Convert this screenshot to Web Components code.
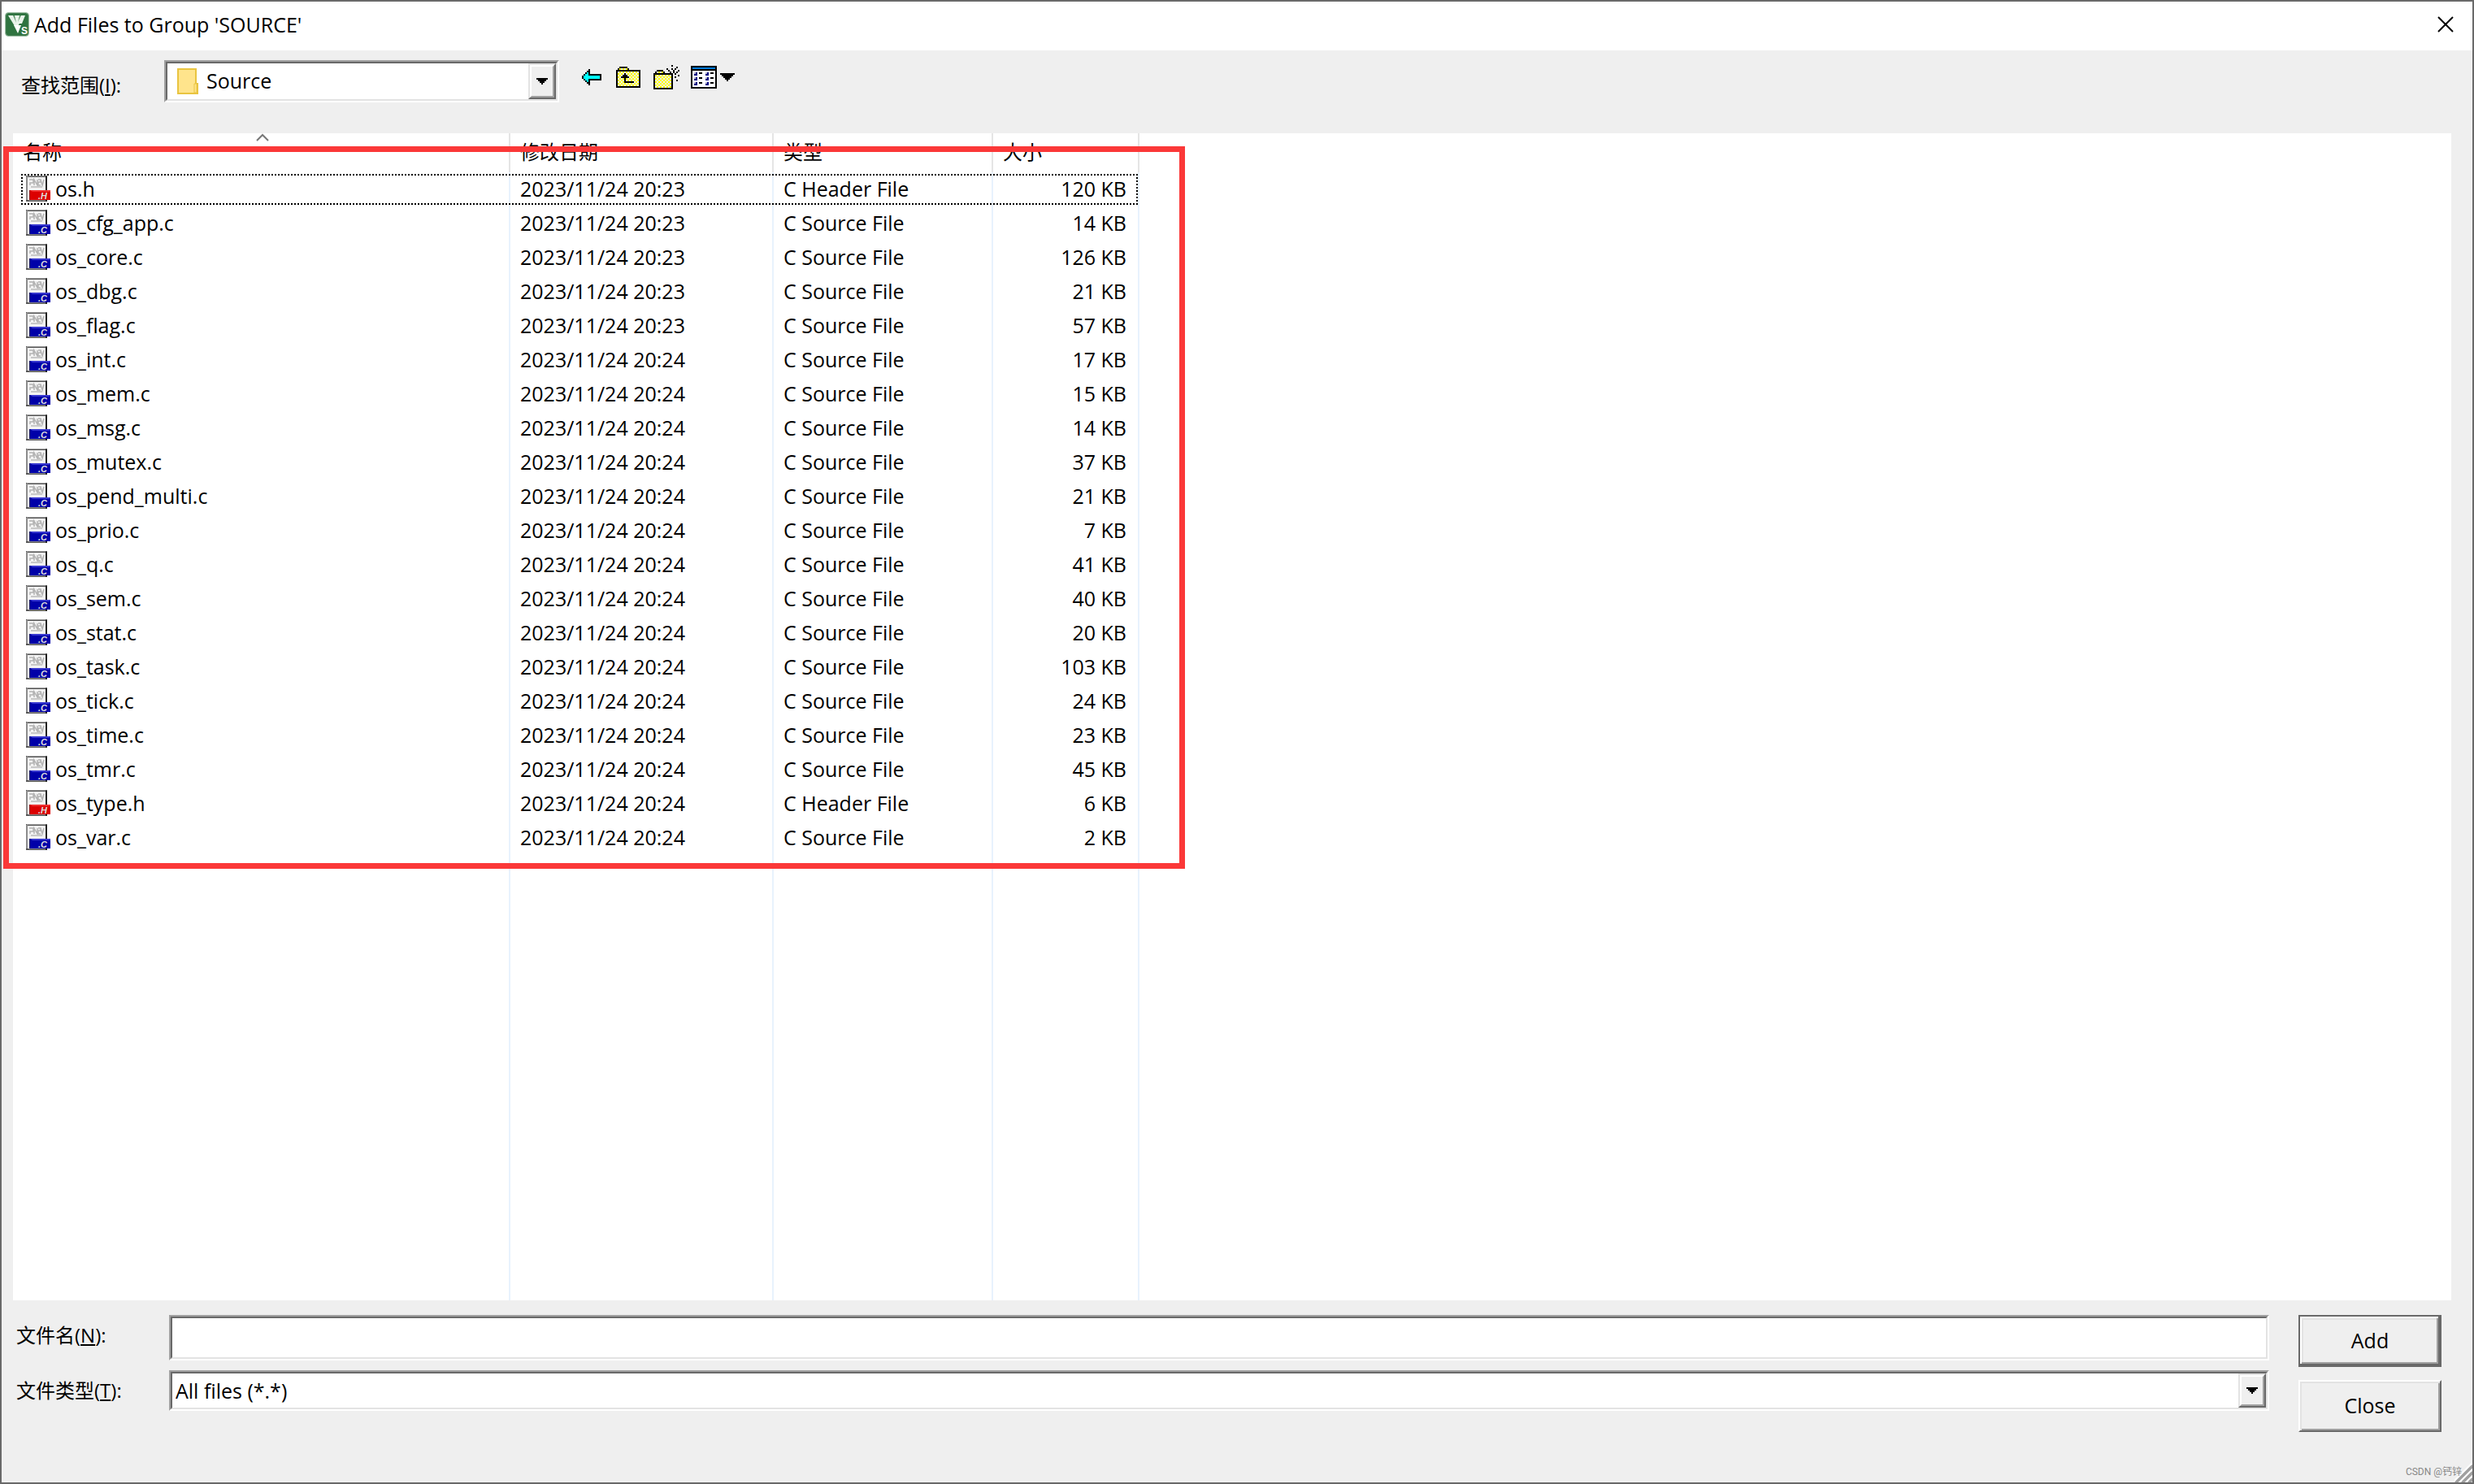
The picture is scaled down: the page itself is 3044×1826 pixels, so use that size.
<!DOCTYPE html>
<html lang="zh-CN">
<head>
<meta charset="utf-8">
<title>Add Files to Group 'SOURCE'</title>
<style>
  html, body { height: 100%; margin: 0; }
  body {
    font: 25px/32px "Open Sans", "Noto Sans CJK SC", sans-serif;
    color: #000;
    --face: #efefef;
    --frame: #696969;
    --shadow: #a0a0a0;
    --light: #e3e3e3;
  }
</style>
</head>
<body>
<file-dialog></file-dialog>
<script>
const define = (name, html, setup) => customElements.define(name, class extends HTMLElement {
  constructor() {
    super();
    this.attachShadow({ mode: 'open' });
  }
  connectedCallback() {
    if (this.shadowRoot.childNodes.length) return;
    this.shadowRoot.innerHTML = typeof html === 'function' ? html(this) : html;
    if (setup) setup(this, this.shadowRoot);
  }
});

/* Title bar: application badge, caption, close button */
define('title-bar', `
<style>
  :host { display: flex; align-items: center; box-sizing: border-box; height: 60px; padding: 0 18px 4px 4px; background: #fff; }
  svg { display: block; }
  .title { margin-left: 6px; flex: 1; }
  button { border: 0; background: none; padding: 5px; }
</style>
<svg width="30" height="30" viewBox="0 0 30 30" aria-hidden="true">
  <rect x="0.5" y="0.5" width="29" height="29" rx="4" fill="#3f7a4d" stroke="#9dbfa5"/>
  <rect x="2" y="2" width="26" height="26" rx="3" fill="#2f7440"/>
  <path d="M4 4h21l-4 10h-3l-2 3h-4z" fill="#e9f3ea"/>
  <path d="M10 4h2l2 9zM18 4h2l-4 8z" fill="#5c9468"/>
  <path d="M11 16h9l-4 10z" fill="#fff"/>
  <text x="20" y="27" font-family="Liberation Sans" font-weight="700" font-size="12" fill="#fff">S</text>
</svg>
<span class="title"><slot></slot></span>
<button type="button" aria-label="Close window">
  <svg width="20" height="20" viewBox="0 0 20 20"><path d="M1 1l18 18M19 1L1 19" stroke="#000" stroke-width="2"/></svg>
</button>`);

/* Sunken drop-down with a raised arrow button */
define('combo-box', el => `
<style>
  :host { display: block; }
  .outer { border: 2px solid; border-color: var(--shadow) #fff #fff var(--shadow); }
  .inner { display: flex; position: relative; box-sizing: border-box; height: var(--combo-height, 46px); border: 2px solid; border-color: var(--frame) var(--light) var(--light) var(--frame); background: #fff; }
  .inner > svg { margin: 6px 0 0 12px; flex: none; }
  select { appearance: none; flex: 1; min-width: 0; border: 0; border-radius: 0; margin: 0; padding: 0 40px 0 4px; background: none; font: inherit; color: inherit; outline: 0; }
  :host([folder]) select { padding: 0 40px 3px 10px; }
  .arrow { position: absolute; right: 0; top: 0; bottom: 0; width: 34px; box-sizing: border-box; border: 2px solid; border-color: var(--light) var(--frame) var(--frame) var(--light); background: var(--face); pointer-events: none; }
  .face { height: 100%; box-sizing: border-box; border: 2px solid; border-color: #fff var(--shadow) var(--shadow) #fff; display: flex; align-items: center; justify-content: center; }
</style>
<div class="outer"><div class="inner">
  ${el.hasAttribute('folder') ? `<svg width="26" height="32" viewBox="0 0 26 32" aria-hidden="true">
    <path d="M1 1h22v18h2v12H1z" fill="#ffe48c" stroke="#e9c440" stroke-width="2"/>
    <path d="M21 30V19h3v11z" fill="#ffe48c" stroke="#e9c440"/></svg>` : ''}
  <select aria-label="${el.getAttribute('label')}"><option>${el.getAttribute('value')}</option></select>
  <div class="arrow"><div class="face"><svg width="14" height="8" viewBox="0 0 7 4" shape-rendering="crispEdges" aria-hidden="true"><path d="M0 0h7v1H6v1H5v1H4v1H3V3H2V2H1V1H0z"/></svg></div></div>
</div></div>`);

/* Navigation icons, drawn on a two-pixel grid */
const icons = {
  back: [12, 10, `<path d="M0 4h1V3h1V2h1V1h1V0h1v3h7v4H5v3H4V9H3V8H2V7H1V6H0z"/><path d="M1 4h1V3h1V2h1v2h7v2H4v2H3V7H2V6H1z" fill="#0ff"/>`],
  up: [15, 13, `<path d="M0 2h1V1h1V0h5v1h1v1h7v11H0z"/><path d="M1 3h13v9H1zM2 1h5v1H2z" fill="url(#d)"/><path d="M5 4h1v1h1v1h1v1H6v2h5v1H5V7H3V6h1V5h1z"/>`],
  fresh: [16, 15, `<path d="M0 5h1V4h1V3h4v1h1v1h5v10H0z"/><path d="M1 6h10v8H1zM2 4h4v1H2z" fill="url(#d)"/><path d="M11 0h1v1h-1zM11 2h1v1h-1zM8 2h1v1H8zM9 3h1v1H9zM10 4h1v1h-1zM14 1h1v1h-1zM13 2h1v1h-1zM12 4h1v1h-1zM13 5h1v1h-1zM15 6h1v1h-1zM13 7h1v1h-1zM14 9h1v1h-1zM12 3h1v1h-1zM7 5h1v1H7zM15 3h1v1h-1zM14 4h1v1h-1z"/>`],
  view: [16, 14, `<path d="M0 0h16v14H0z"/><path d="M1 1h14v1H1z" fill="#0078d7"/><path d="M1 3h14v10H1z" fill="#fff"/>
    <path d="M2 4h2v2H2zM2 7h2v2H2zM2 10h2v2H2zM9 4h2v2H9zM9 7h2v2H9zM9 10h2v2H9z" fill="#000080"/>
    <path d="M2 4h1v1H2zM2 7h1v1H2zM2 10h1v1H2zM9 4h1v1H9zM9 7h1v1H9zM9 10h1v1H9z" fill="#b8b8d0"/>
    <path d="M5 4h2v1H5zM5 7h2v1H5zM5 10h2v1H5zM12 4h2v1h-2zM12 7h2v1h-2zM12 10h2v1h-2z"/>`],
  drop: [9, 5, `<path d="M0 0h9v1H8v1H7v1H6v1H5v1H4V4H3V3H2V2H1V1H0z"/>`]
};
define('tool-button', el => {
  const [w, h, art] = icons[el.getAttribute('icon')];
  return `
<style>
  :host { display: block; }
  button { display: block; border: 0; padding: 0; background: none; }
  svg { display: block; }
</style>
<button type="button" aria-label="${el.getAttribute('label')}">
  <svg width="${w * 2}" height="${h * 2}" viewBox="0 0 ${w} ${h}" shape-rendering="crispEdges">
    <defs><pattern id="d" width="2" height="2" patternUnits="userSpaceOnUse"><path d="M0 0h2v2H0z" fill="#ff0"/><path d="M0 0h1v1H0zM1 1h1v1H1z" fill="#efefef"/></pattern></defs>
    ${art}
  </svg>
</button>`;
});

define('look-in-bar', `
<style>
  :host { display: flex; align-items: flex-start; height: 90px; padding: 12px 24px 0; }
  label { width: 176px; padding-top: 15px; font-size: 24px; }
  combo-box { width: 486px; --combo-height: 48px; }
  .tools { display: flex; align-items: center; height: 42px; margin-left: 28px; }
  .tools > * + * { margin-left: 18px; }
  .tools > .near { margin-left: 16px; }
  .tools > .nearer { margin-left: 14px; }
  .tools > .tight { margin-left: 4px; }
</style>
<label>查找范围(<u>I</u>):</label>
<combo-box folder label="查找范围" value="Source"></combo-box>
<div class="tools">
  <tool-button icon="back" label="Back"></tool-button>
  <tool-button icon="up" label="Up one level"></tool-button>
  <tool-button class="near" icon="fresh" label="New folder"></tool-button>
  <tool-button class="nearer" icon="view" label="View"></tool-button>
  <tool-button class="tight" icon="drop" label="View menu"></tool-button>
</div>`);

/* Source and header file icon */
define('file-icon', el => {
  const header = el.getAttribute('kind') === 'h';
  return `
<style>:host { display: block; flex: none; } svg { display: block; }</style>
<svg width="30" height="32" viewBox="0 0 30 32" aria-hidden="true">
  <path d="M0 0h26v32H0z" fill="#555"/>
  <path d="M1 0h23v1H1z" fill="#999"/>
  <path d="M0 1h2v29H0z" fill="#8c8c8c"/>
  <path d="M2 2h22v28H2z" fill="#f3f3f3"/>
  <path d="M24 1h2v31h-2z" fill="#222"/>
  <path d="M4 5h5v4H5v3M10 12V5l4 7V5M15 5h3v3h-3v4h3M18 5l2 7 2-7" fill="none" stroke="#b4b4b4" stroke-width="1.500"/>
  <path d="M6 14h14" stroke="#c8c8c8" stroke-width="2"/>
  <path d="M4 18h20v12H4z" fill="${header ? '#8a1414' : '#15155e'}"/>
  <path d="M5 18h25v12H5z" fill="${header ? '#dc0000' : '#0000a8'}"/>
  <path d="M5 18h25v2H8z" fill="${header ? '#f03030' : '#3838d0'}"/>
  <path d="M3 30h21v1H3z" fill="#888"/>
  <text x="15" y="29" font-family="Liberation Sans" font-style="italic" font-weight="700" font-size="11" fill="#ddd">.${header ? 'H' : 'C'}</text>
</svg>`;
});

const files = [
  ['os.h', '20:23', 120], ['os_cfg_app.c', '20:23', 14], ['os_core.c', '20:23', 126],
  ['os_dbg.c', '20:23', 21], ['os_flag.c', '20:23', 57], ['os_int.c', '20:24', 17],
  ['os_mem.c', '20:24', 15], ['os_msg.c', '20:24', 14], ['os_mutex.c', '20:24', 37],
  ['os_pend_multi.c', '20:24', 21], ['os_prio.c', '20:24', 7], ['os_q.c', '20:24', 41],
  ['os_sem.c', '20:24', 40], ['os_stat.c', '20:24', 20], ['os_task.c', '20:24', 103],
  ['os_tick.c', '20:24', 24], ['os_time.c', '20:24', 23], ['os_tmr.c', '20:24', 45],
  ['os_type.h', '20:24', 6], ['os_var.c', '20:24', 2]
];
const row = ([name, time, size]) => {
  const kind = name.slice(-1);
  return `<tr><td><div class="name"><file-icon kind="${kind}"></file-icon>${name}</div></td>
    <td>2023/11/24 ${time}</td><td>C ${kind === 'h' ? 'Header' : 'Source'} File</td><td class="size">${size} KB</td></tr>`;
};

define('file-list', `
<style>
  :host { display: flex; position: relative; background: #fff; }
  table { table-layout: fixed; width: 1386px; border-collapse: separate; border-spacing: 0; }
  th, td { box-sizing: border-box; padding: 0 12px; border-right: 2px solid #e8f2fd; white-space: nowrap; text-align: left; }
  th { position: relative; height: 48px; padding-bottom: 2px; border-color: #e5e5e5; font-weight: 400; font-size: 24px; line-height: 46px; }
  th svg { position: absolute; left: 50%; top: 0; margin-left: -6px; }
  td { height: 42px; padding-bottom: 2px; line-height: 40px; }
  td.size { text-align: right; padding-right: 14px; }
  .name { display: flex; align-items: center; gap: 6px; margin-left: 4px; }
  tr.rest td { height: auto; }
  tbody tr:first-child { position: relative; }
  tbody tr:first-child td:first-child::after {
    content: ""; position: absolute; left: 10px; top: 2px; width: 1374px; height: 38px;
    background:
      repeating-linear-gradient(90deg, #000 0 2px, transparent 2px 4px) 0 0 / 100% 2px no-repeat,
      repeating-linear-gradient(90deg, #000 0 2px, transparent 2px 4px) 0 100% / 100% 2px no-repeat,
      repeating-linear-gradient(#000 0 2px, transparent 2px 4px) 0 0 / 2px 100% no-repeat,
      repeating-linear-gradient(#000 0 2px, transparent 2px 4px) 100% 0 / 2px 100% no-repeat;
  }
  .mark { position: absolute; left: -12px; top: 16px; box-sizing: border-box; width: 1454px; height: 889px; border: 7px solid #fb3838; }
</style>
<table>
  <colgroup><col style="width:612px"><col style="width:324px"><col style="width:270px"><col style="width:180px"></colgroup>
  <thead><tr>
    <th>名称<svg width="16" height="10" viewBox="0 0 16 10" aria-hidden="true"><path d="M1 9l7-7 7 7" fill="none" stroke="#777" stroke-width="2"/></svg></th>
    <th>修改日期</th><th>类型</th><th>大小</th>
  </tr></thead>
  <tbody>${files.map(row).join('')}<tr class="rest"><td></td><td></td><td></td><td></td></tr></tbody>
</table>
<div class="mark"></div>`);

define('push-button', el => `
<style>
  :host { display: block; }
  button { display: block; width: 100%; height: 64px; padding: 0 0 3px; font: inherit; color: inherit; background: var(--face); border: 2px solid; border-color: #fff var(--frame) var(--frame) #fff; box-shadow: inset 2px 2px var(--light), inset -2px -2px var(--shadow); }
  :host([default]) button { border-color: var(--frame); box-shadow: inset -2px -2px var(--frame), inset 2px 2px #fff, inset -4px -4px var(--shadow), inset 4px 4px var(--light); }
</style>
<button type="button"><slot></slot></button>`);

define('file-form', `
<style>
  :host { display: flex; gap: 36px; height: 224px; box-sizing: border-box; padding: 18px 38px 0 18px; position: relative; }
  .fields { flex: 1; display: flex; flex-direction: column; gap: 12px; }
  .field { display: flex; }
  label { width: 188px; font-size: 24px; padding-top: 9px; }
  combo-box, .edit { flex: 1; }
  .edit { border: 2px solid; border-color: var(--shadow) #fff #fff var(--shadow); }
  input { display: block; width: 100%; height: 52px; box-sizing: border-box; border: 2px solid; border-color: var(--frame) var(--light) var(--light) var(--frame); background: #fff; font: inherit; outline: 0; padding: 0 4px; }
  .actions { width: 176px; display: flex; flex-direction: column; gap: 16px; }
  .credit { position: absolute; right: 13px; bottom: 4px; font: 12px/18px Roboto, "Noto Sans CJK SC", sans-serif; color: #888; }
  .grip { position: absolute; right: 0; bottom: 0; }
</style>
<div class="fields">
  <div class="field"><label for="n">文件名(<u>N</u>):</label><div class="edit"><input id="n" type="text"></div></div>
  <div class="field"><label>文件类型(<u>T</u>):</label><combo-box label="文件类型" value="All files (*.*)"></combo-box></div>
</div>
<div class="actions"><push-button default>Add</push-button><push-button>Close</push-button></div>
<svg class="grip" width="22" height="24" viewBox="0 0 22 24" aria-hidden="true">
  <path d="M-2 24L22 0M6 24L22 8M14 24l8-8" stroke="#fff" stroke-width="2"/>
  <path d="M1 24L22 3M3 24L22 5M9 24l13-13M11 24l11-11M17 24l5-5M19 24l3-3" stroke="#a0a0a0" stroke-width="2"/>
</svg>
<span class="credit">CSDN @钙锌</span>`);

define('file-dialog', `
<style>
  :host { display: flex; flex-direction: column; box-sizing: border-box; min-height: 100vh; border: 2px solid var(--frame); background: var(--face); }
  file-list { flex: 1; margin: 0 26px 0 14px; }
</style>
<title-bar>Add Files to Group 'SOURCE'</title-bar>
<look-in-bar></look-in-bar>
<file-list></file-list>
<file-form></file-form>`);
</script>
</body>
</html>
